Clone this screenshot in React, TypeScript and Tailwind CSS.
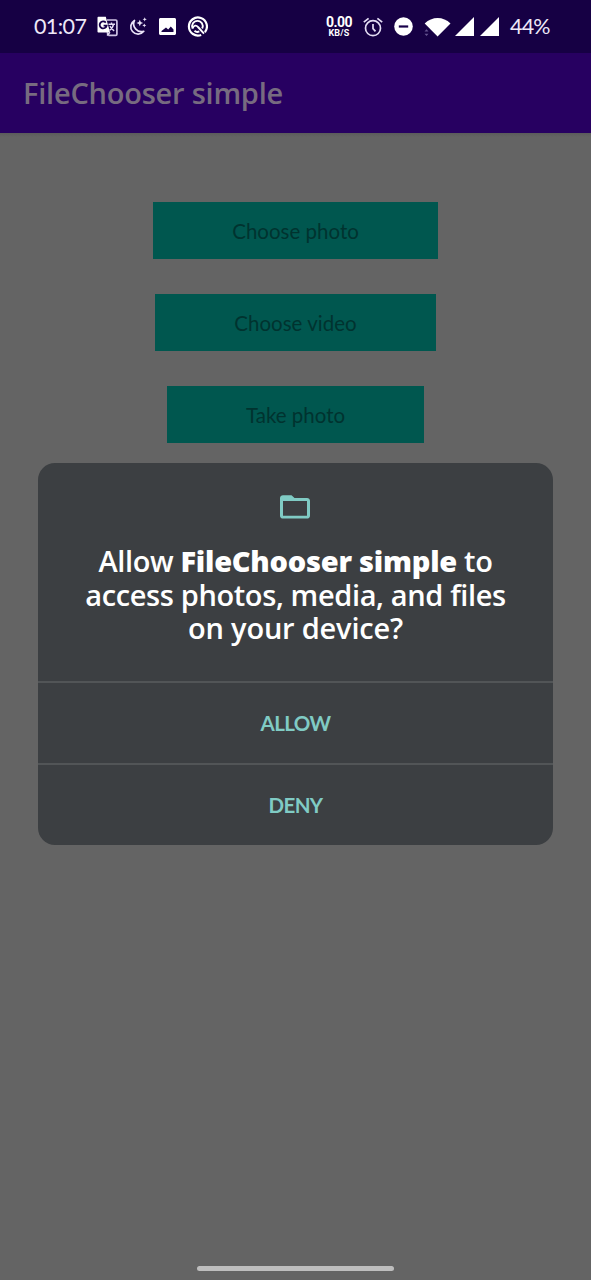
import type { ReactNode } from "react";

function TranslateIcon() {
  return (
    <svg className="h-[21px] w-[21px]" viewBox="0 0 21 21" fill="none">
      <path d="M10 4h8.700c.7 0 1.200.5 1.200 1.200v13c0 .7-.5 1.200-1.200 1.200H12l-2-3" stroke="#cfc4e4" strokeWidth="1.700" />
      <path d="M1.600.7h7.200L13 16.600H1.600C1 16.600.5 16.100.5 15.500V1.800C.5 1.200 1 .7 1.600.7z" fill="#fff" />
      <path d="M8.800 6.600a3.500 3.500 0 1 0 .8 3.100H6.600" stroke="#18004a" strokeWidth="1.800" />
      <path d="M11.500 8.200h6.500M14.500 6.500v1.700M16.500 8.200c-.4 2.800-2 4.800-4 6.200M13 10c.8 2.200 2.300 3.700 4.200 4.900M10 19.400l3-3.200" stroke="#e4dcf4" strokeWidth="1.400" />
    </svg>
  );
}

function MoonIcon() {
  return (
    <svg className="h-[20px] w-[20px]" viewBox="0 0 20 20" fill="none">
      <path d="M6.500 3.400A7.300 7.300 0 1 0 15.800 14.300A7.800 7.800 0 0 1 6.500 3.400z" stroke="#e9e2f7" strokeWidth="1.700" strokeLinejoin="round" />
      <path d="M11.800 2.700l1 2.300 2.300 1-2.300 1-1 2.300-1-2.300-2.300-1 2.300-1zM16.700.2l.6 1.500 1.500.6-1.500.6-.6 1.500-.6-1.500-1.500-.6 1.500-.6zM16.300 6.400l.6 1.400 1.400.6-1.400.6-.6 1.400-.6-1.400-1.400-.6 1.400-.6z" fill="#e9e2f7" />
    </svg>
  );
}

function ImageIcon() {
  return (
    <svg className="h-[17px] w-[17px]" viewBox="0 0 17 17">
      <path fillRule="evenodd" fill="#fff" d="M1.500 0h14c.8 0 1.500.7 1.500 1.500v14c0 .8-.7 1.500-1.500 1.500h-14C.7 17 0 16.300 0 15.500v-14C0 .7.700 0 1.500 0zM2.500 14h12V11.500l-2.700-3-2.600 3-2.200-2-4.500 3.500z" />
    </svg>
  );
}

function CircleArcIcon() {
  return (
    <svg className="h-[21px] w-[21px]" viewBox="0 0 21 21" fill="none" stroke="#fff">
      <path d="M17.900 16.200A9 9 0 1 0 14.200 18.900" strokeWidth="2.200" />
      <path d="M5.700 12.500A5.300 5.300 0 1 1 15.200 12.500" strokeWidth="1.900" />
      <path d="M5.600 12.300C7 9 9.300 9 11 11L17 17.600M7.500 14.800c1.300 1.200 3.200 1.400 4.800.6" strokeWidth="1.900" />
    </svg>
  );
}

function AlarmIcon() {
  return (
    <svg className="h-[20px] w-[20px]" viewBox="0 0 20 20" fill="none" stroke="#e4dcf4" strokeWidth="1.700">
      <circle cx="10" cy="11.200" r="7.500" />
      <path d="M10 7v4.700l2.500 2.700M.8 5.200L5.600 1.300M19.200 5.200L14.400 1.300" />
    </svg>
  );
}

function DoNotDisturbIcon() {
  return (
    <svg className="h-[19px] w-[19px]" viewBox="0 0 19 19">
      <circle cx="9.500" cy="9.500" r="9.300" fill="#fff" />
      <path d="M4.800 9.500h9.400" stroke="#18004a" strokeWidth="2.200" />
    </svg>
  );
}

function WifiIcon() {
  return (
    <svg className="h-[20px] w-[27px]" viewBox="0 0 27 20">
      <path d="M.7 6.500C8-.9 19.300-.9 26.500 6.500L13.600 19.400z" fill="#fff" />
      <path d="M.5 14.600l2-2.400 2 2.400zM.5 16.700l2 2.400 2-2.400z" fill="#655390" />
    </svg>
  );
}

function SignalIcon() {
  return (
    <svg className="h-[19px] w-[19px]" viewBox="0 0 19 19">
      <path d="M19 0v19H0z" fill="#fff" />
    </svg>
  );
}

function FolderIcon() {
  return (
    <svg className="mr-px h-[24px] w-[30px]" viewBox="0 0 30 24">
      <path fillRule="evenodd" fill="#80cbc4" d="M3 .3h8.500L14.500 3H27c1.700 0 3 1.200 3 2.800v14.900c0 1.600-1.300 2.900-3 2.900H3c-1.700 0-3-1.300-3-2.900V3.100C0 1.500 1.300.3 3 .3zM3 6v14.800h24V6z" />
    </svg>
  );
}

function StatusBar() {
  return (
    <header className="flex h-[53px] items-center bg-[#160044] font-['Lato',sans-serif] text-[#eee8f8]">
      <div className="ml-[34px] w-[63px] whitespace-nowrap text-[21.500px] leading-[53px] tracking-[-0.6px]">01:07</div>
      <TranslateIcon />
      <div className="ml-[10px]"><MoonIcon /></div>
      <div className="ml-[11px]"><ImageIcon /></div>
      <div className="ml-[11px]"><CircleArcIcon /></div>
      <div className="ml-[117px] w-[28px] text-center font-['Roboto',sans-serif] font-bold text-white">
        <div className="text-[14px] leading-[13px] tracking-[-0.5px]">0.00</div>
        <div className="text-[9px] leading-[9px] tracking-[0.2px]">KB/S</div>
      </div>
      <div className="ml-[10px]"><AlarmIcon /></div>
      <div className="ml-[11px]"><DoNotDisturbIcon /></div>
      <div className="ml-[11px]"><WifiIcon /></div>
      <div className="ml-[4px]"><SignalIcon /></div>
      <div className="ml-[6px]"><SignalIcon /></div>
      <div className="ml-[11px] whitespace-nowrap text-[21.500px] leading-[53px] tracking-[-0.8px]">44%</div>
    </header>
  );
}

function ActionButton({ className, children }: { className: string; children: ReactNode }) {
  return (
    <button className={`h-[57px] whitespace-nowrap bg-[#00574f] pt-[2px] font-['Lato',sans-serif] text-[20.500px] text-[#00332f] ${className}`}>
      {children}
    </button>
  );
}

function DialogButton({ children }: { children: ReactNode }) {
  return (
    <button className="h-[82px] border-t-2 border-[#525557] font-['Lato',sans-serif] text-[20.500px] font-bold tracking-[-0.6px] text-[#80cbc4]">
      {children}
    </button>
  );
}

function PermissionDialog() {
  return (
    <section
      role="dialog"
      className="absolute left-[38px] top-[463px] flex h-[382px] w-[515px] flex-col overflow-hidden rounded-[17px] bg-[#3c3f42] text-center"
    >
      <div className="flex h-[218px] flex-col items-center pt-[32px]">
        <FolderIcon />
        <h2 className="mt-[25px] whitespace-nowrap text-[29px] font-semibold leading-[33.700px] tracking-[-0.370px] text-white">
          <div>Allow <b className="font-extrabold tracking-[-0.250px]">FileChooser simple</b> to</div>
          <div>access photos, media, and files</div>
          <div className="tracking-[-0.2px]">on your device?</div>
        </h2>
      </div>
      <DialogButton>ALLOW</DialogButton>
      <DialogButton>DENY</DialogButton>
    </section>
  );
}

export default function App() {
  return (
    <div className="relative flex h-[1280px] w-[591px] flex-col overflow-hidden bg-[#646464] font-['Open_Sans','Noto_Sans',sans-serif]">
      <StatusBar />
      <div className="flex h-[80px] items-center bg-[#270061] pl-[23px] text-[29px] font-semibold tracking-[-0.230px] text-[#776b80]">
        <h1 className="whitespace-nowrap">FileChooser simple</h1>
      </div>
      <div className="h-[4px] bg-gradient-to-b from-[#5b5b5b] to-[#646464]" />
      <main className="flex flex-1 flex-col items-center gap-[35px] pt-[65px]">
        <ActionButton className="w-[285px]">Choose photo</ActionButton>
        <ActionButton className="w-[281px]">Choose video</ActionButton>
        <ActionButton className="w-[257px]">Take photo</ActionButton>
      </main>
      <div className="mx-auto mb-[9px] h-[5px] w-[197px] rounded-full bg-[#bebebe]" />
      <PermissionDialog />
    </div>
  );
}
